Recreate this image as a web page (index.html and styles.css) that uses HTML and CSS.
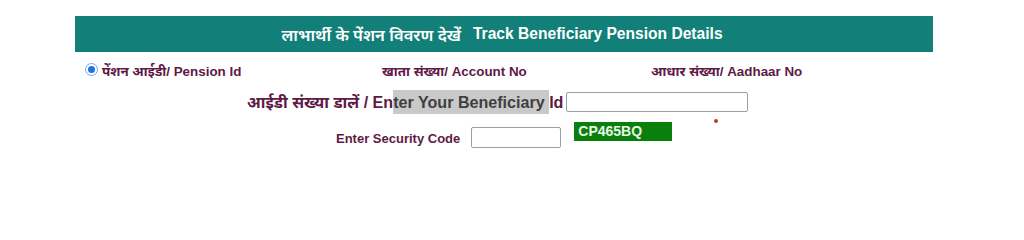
FILE: index.html
```html
<!DOCTYPE html>
<html>
<head>
<meta charset="utf-8">
<link rel="stylesheet" href="styles.css">
</head>
<body>
<div class="panel">
  <div class="head">
    <span class="head-hi">लाभार्थी के पेंशन विवरण देखें</span>
    <span class="head-en">Track Beneficiary Pension Details</span>
  </div>
  <div class="options">
    <label class="opt"><span class="radio"><span class="radio-dot"></span></span>पेंशन आईडी/ Pension Id</label>
    <label class="opt">खाता संख्या/ Account No</label>
    <label class="opt">आधार संख्या/ Aadhaar No</label>
  </div>
  <div class="idrow">
    <span class="idlabel">आईडी संख्या डालें / En<span class="sel">ter Your Beneficiary </span>Id</span>
    <span class="input idinput"></span>
  </div>
  <div class="coderow">
    <span class="codelabel">Enter Security Code</span>
    <span class="input codeinput"></span>
    <span class="captcha">CP465BQ</span>
    <span class="req"></span>
  </div>
</div>
</body>
</html>
```

FILE: styles.css
```css
html, body {
  margin: 0;
  padding: 0;
  background: #ffffff;
}
body {
  font-family: "Liberation Sans", Arial, "Noto Sans", sans-serif;
  color: #5e1a45;
}
.panel {
  width: 858px;
  margin: 16px 0 0 75px;
}
.head {
  height: 36px;
  background: #127f78;
  color: #ffffff;
  display: flex;
  align-items: center;
  justify-content: center;
  gap: 12px;
  padding-right: 4px;
}
.head-hi {
  font-family: "Noto Sans", "Liberation Sans", sans-serif;
  font-size: 16.6px;
  font-weight: 600;
}
.head-en {
  font-size: 15.6px;
  font-weight: bold;
}
.options {
  display: grid;
  grid-template-columns: 297px 269px auto;
  padding-left: 10px;
  margin-top: 9px;
  height: 20px;
  align-items: center;
  font-size: 13.4px;
  font-weight: bold;
}
.opt {
  display: flex;
  align-items: center;
  white-space: nowrap;
}
.radio {
  width: 11px;
  height: 11px;
  border-radius: 50%;
  border: 1px solid #7aa6e8;
  background: #ffffff;
  display: inline-flex;
  align-items: center;
  justify-content: center;
  margin-right: 4px;
  margin-top: -4px;
}
.radio-dot {
  width: 7px;
  height: 7px;
  border-radius: 50%;
  background: #1a73e8;
}
.idrow {
  display: flex;
  align-items: center;
  padding-left: 172px;
  margin-top: 10px;
  height: 22px;
}
.idlabel {
  font-size: 16.1px;
  font-weight: bold;
  line-height: 22px;
  white-space: pre;
}
.sel {
  background: #c9c9c9;
  color: #3f3f3f;
  padding: 3px 0 3px;
}
.input {
  display: inline-block;
  border: 1px solid #9e9e9e;
  border-radius: 2px;
  background: #ffffff;
  box-sizing: border-box;
}
.idinput {
  width: 182px;
  height: 20px;
  margin-left: 3px;
}
.coderow {
  display: flex;
  align-items: flex-start;
  padding-left: 261px;
  margin-top: 9px;
  height: 30px;
}
.codelabel {
  font-size: 13px;
  font-weight: bold;
  margin-top: 9px;
}
.codeinput {
  width: 90px;
  height: 21px;
  margin-left: 11px;
  margin-top: 5px;
}
.captcha {
  width: 98px;
  height: 19px;
  margin-left: 13px;
  background: #0b7f0b;
  color: #e8f5e8;
  font-size: 14px;
  font-weight: bold;
  line-height: 18px;
  padding-left: 4px;
  box-sizing: border-box;
}
.req {
  width: 4px;
  height: 4px;
  border-radius: 50%;
  background: #c0392b;
  margin-left: 42px;
  margin-top: -3px;
}
```
